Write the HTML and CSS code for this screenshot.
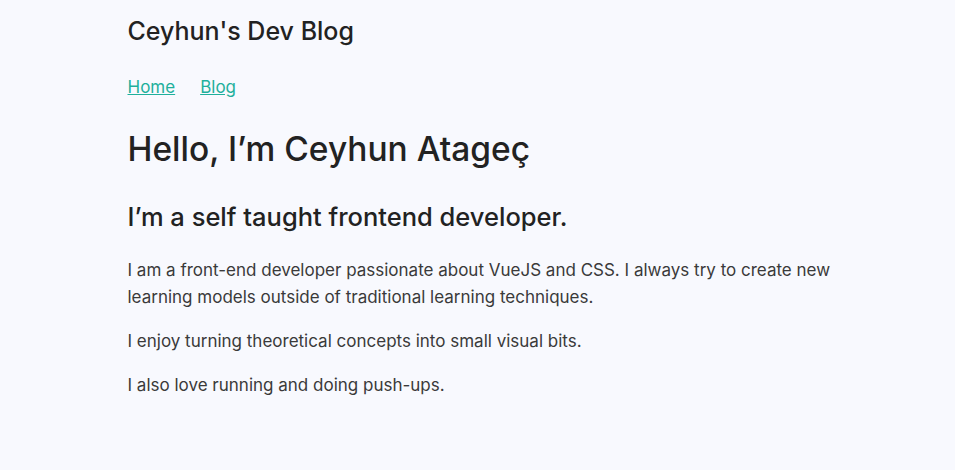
FILE: index.html
```html
<!DOCTYPE html>
<html lang="en">
<head>
<meta charset="utf-8">
<title>Ceyhun's Dev Blog</title>
<link rel="stylesheet" href="styles.css">
</head>
<body>
<div class="page">
  <header class="site-header">
    <div class="site-title">Ceyhun's Dev Blog</div>
    <nav class="nav">
      <a href="#" class="nav-link">Home</a>
      <a href="#" class="nav-link">Blog</a>
    </nav>
  </header>
  <main class="content">
    <h1 class="hero-title">Hello, I’m Ceyhun Atageç</h1>
    <h2 class="hero-sub">I’m a self taught frontend developer.</h2>
    <p class="text">I am a front-end developer passionate about VueJS and CSS. I always try to create new learning models outside of traditional learning techniques.</p>
    <p class="text">I enjoy turning theoretical concepts into small visual bits.</p>
    <p class="text">I also love running and doing push-ups.</p>
  </main>
</div>
</body>
</html>
```
FILE: styles.css
```css
html, body {
  margin: 0;
  padding: 0;
  background: #f8f9fe;
}
body {
  font-family: Inter, "Open Sans", sans-serif;
  color: #222;
}
.page {
  box-sizing: border-box;
  max-width: 740px;
  margin: 0 auto;
  padding: 0 0 0 20px;
}
.site-header {
  display: flex;
  flex-direction: column;
}
.site-title {
  font-size: 25px;
  font-weight: 500;
  line-height: 30px;
  margin-top: 16px;
}
.nav {
  display: flex;
  gap: 25px;
  margin-top: 31px;
}
.nav-link {
  color: #1fb09c;
  font-size: 17px;
  line-height: 20px;
}
.hero-title {
  font-size: 33.5px;
  font-weight: 500;
  line-height: 40px;
  margin: 32px 0 0;
}
.hero-sub {
  font-size: 25.5px;
  font-weight: 500;
  line-height: 32px;
  margin: 32px 0 24px;
}
.text {
  font-size: 17px;
  line-height: 27px;
  color: #3a3a3a;
  margin: 17px 0 0;
}
```
